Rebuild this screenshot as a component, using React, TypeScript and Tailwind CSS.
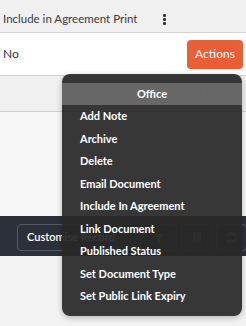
import React from "react";

const items = [
  "Add Note",
  "Archive",
  "Delete",
  "Email Document",
  "Include In Agreement",
  "Link Document",
  "Published Status",
  "Set Document Type",
  "Set Public Link Expiry",
];

export default function App() {
  return (
    <div
      className="relative w-[246px] h-[326px] overflow-hidden bg-[#f3f3f3]"
      style={{ fontFamily: 'Lato, "Open Sans", sans-serif' }}
    >
      {/* header row */}
      <div className="flex h-[33px] items-center border-b border-[#d2d2d2] bg-[#f0f0f0] pt-[6px]">
        <span className="w-[163px] shrink-0 whitespace-nowrap pl-[3px] text-[11.5px] text-[#3a3a3a]">Include in Agreement Print</span>
        <div className="flex flex-col gap-[1px]">
          <span className="block h-[3px] w-[3px] rounded-[1px] bg-[#333]" />
          <span className="block h-[3px] w-[3px] rounded-[1px] bg-[#333]" />
          <span className="block h-[3px] w-[3px] rounded-[1px] bg-[#333]" />
        </div>
      </div>
      {/* data row */}
      <div className="flex h-[43px] items-center justify-between border-b border-[#d2d2d2] bg-white pl-[3px] pr-[3px]">
        <span className="text-[12px] text-[#333]">No</span>
        <button className="h-[29px] w-[56px] rounded-[4px] bg-[#e95d37] text-[12px] text-white">Actions</button>
      </div>
      {/* pager */}
      <div className="flex h-[36px] items-center justify-end border-b border-[#cfcfcf] bg-[#f0f0f0] pr-[13px]">
        <span className="text-[11.5px] text-[#8a8a8a]">1 - 1 of 1 items</span>
      </div>
      <div className="h-[104px] bg-[#f7f7f7]" />
      {/* toolbar */}
      <div className="flex h-[40px] items-start gap-[4px] bg-[#2c3038] pl-[17px] pt-[8px]">
        <div className="flex h-[27px] w-[95px] shrink-0 items-center whitespace-nowrap rounded-[4px] border border-[#555a62] pl-[9px] text-[11px] font-semibold text-white">
          Customise Record
        </div>
        <div className="h-[27px] w-[20px] shrink-0 rounded-[4px] border border-[#555a62]" />
        <div className="flex h-[27px] w-[37px] shrink-0 items-center justify-center rounded-[4px] border border-[#555a62]">
          <svg width="12" height="12" viewBox="0 0 24 24" fill="#7a7d82"><path d="M3 4h18l-7 8v7l-4 2v-9z" /></svg>
        </div>
        <div className="flex h-[27px] w-[31px] shrink-0 items-center justify-center rounded-[4px] border border-[#555a62]">
          <svg width="12" height="13" viewBox="0 0 24 26" fill="#7a7d82"><path d="M5 2h15v19H7a2 2 0 0 0 0 3h13v1H7a3 3 0 0 1-3-3V4a2 2 0 0 1 1-2z" /></svg>
        </div>
        <div className="flex h-[27px] w-[31px] shrink-0 items-center justify-center rounded-[4px] border border-[#555a62]">
          <svg width="13" height="13" viewBox="0 0 24 24" fill="none" stroke="#7a7d82" strokeWidth="3.5"><path d="M20 12a8 8 0 0 1-14 5M4 12a8 8 0 0 1 14-5" /><path d="M18 2v5h-5M6 22v-5h5" /></svg>
        </div>
      </div>

      {/* menu */}
      <div className="absolute left-[62px] top-[74px] h-[242px] w-[180px] rounded-[8px] bg-[rgba(40,40,40,0.93)] pt-[9px] shadow-[0_2px_6px_rgba(0,0,0,0.25)]">
        <div className="flex h-[22px] items-center justify-center bg-[rgba(112,112,112,0.85)] text-[11px] font-bold text-white">
          Office
        </div>
        <div className="flex flex-col pl-[18px]">
          {items.map((t) => (
            <div key={t} className="flex h-[22.5px] items-center whitespace-nowrap text-[11px] font-bold text-white">
              {t}
            </div>
          ))}
        </div>
      </div>
    </div>
  );
}
